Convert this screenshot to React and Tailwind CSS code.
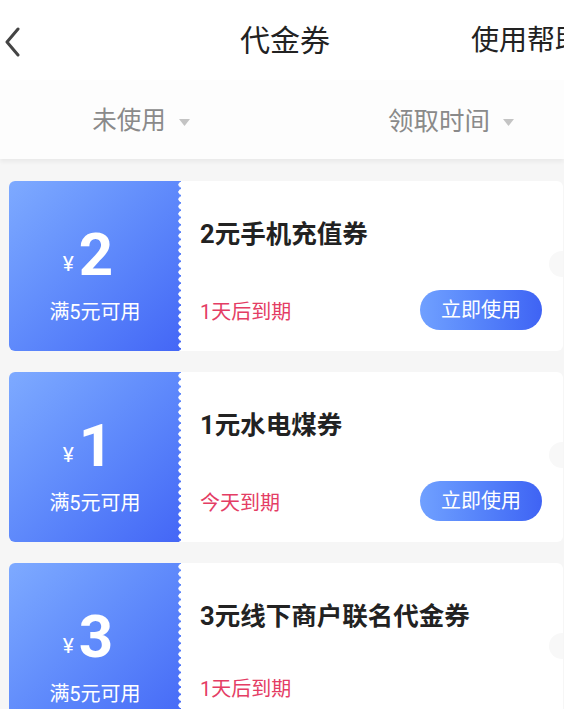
import React from "react";

const coupons = [
  { amount: "2", title: "2元手机充值券", expire: "1天后到期", button: true },
  { amount: "1", title: "1元水电煤券", expire: "今天到期", button: true },
  { amount: "3", title: "3元线下商户联名代金券", expire: "1天后到期", button: false },
];

const Caret = () => (
  <svg width="11" height="7" viewBox="0 0 11 7" className="ml-[13px] mt-[2px]">
    <path d="M0 0 L11 0 L5.5 7 Z" fill="#c4c4c4" />
  </svg>
);

const CouponCard = ({ coupon }) => (
  <div className="relative flex h-[170px] w-[554px] overflow-hidden rounded-[6px] bg-white">
    <div className="relative flex w-[172px] shrink-0 flex-col items-center bg-gradient-to-br from-[#7eaaff] to-[#4466f6] text-white">
      <div className="mt-[50px] flex items-end pr-[14px]">
        <span className="mb-[4px] mr-[5px] text-[21px] leading-none">¥</span>
        <span className="text-[60px] font-bold leading-[48px]">{coupon.amount}</span>
      </div>
      <div className="mt-[19px] text-[20px] leading-[28px]">满5元可用</div>
      <div className="absolute right-0 top-0 h-full w-[3px] bg-[radial-gradient(circle_at_100%_50%,#ffffff_2.4px,transparent_2.9px)] bg-[length:3px_7.3px]" />
    </div>
    <div className="flex flex-1 flex-col pl-[19px] pr-[21px]">
      <div className="mt-[36px] text-[25.5px] font-bold leading-[34px] text-[#222]">{coupon.title}</div>
      <div className="mt-[39px] flex items-center justify-between">
        <span className="mt-[3px] text-[20px] leading-[28px] text-[#e43d64]">{coupon.expire}</span>
        {coupon.button && (
          <button className="h-[40px] w-[122px] rounded-full bg-gradient-to-r from-[#70a0ff] to-[#3f63f4] text-[20px] text-white">
            立即使用
          </button>
        )}
      </div>
    </div>
    <div className="absolute right-[-12px] top-[70px] h-[26px] w-[26px] rounded-full bg-[#f8f8f8]" />
  </div>
);

export default function App() {
  return (
    <div
      className="h-[709px] w-[564px] overflow-hidden bg-[#f6f6f6]"
      style={{ fontFamily: 'Roboto, "Noto Sans CJK SC", sans-serif' }}
    >
      <div className="relative flex h-[80px] items-center bg-white">
        <svg width="16" height="30" viewBox="0 0 16 30" className="absolute left-[4px] top-[27px]">
          <path d="M14 2 L3 15 L14 28" fill="none" stroke="#444" strokeWidth="3" strokeLinecap="round" strokeLinejoin="round" />
        </svg>
        <div className="absolute left-[240px] top-[20px] text-[30px] leading-[42px] text-[#222]">代金券</div>
        <div className="absolute left-[471px] top-[21px] whitespace-nowrap text-[28px] leading-[40px] text-[#222]">使用帮助</div>
      </div>
      <div className="relative flex h-[79px] items-center bg-[#fdfdfd] pt-[4px] shadow-[0_3px_4px_rgba(0,0,0,0.05)]">
        <div className="flex w-[282px] items-center justify-center">
          <span className="text-[24.5px] text-[#8a8a8a]">未使用</span>
          <Caret />
        </div>
        <div className="flex w-[282px] items-center justify-center pl-[56px]">
          <span className="text-[25.5px] text-[#8a8a8a]">领取时间</span>
          <Caret />
        </div>
      </div>
      <div className="flex flex-col gap-[21px] pl-[9px] pt-[22px]">
        {coupons.map((c) => (
          <CouponCard key={c.amount} coupon={c} />
        ))}
      </div>
    </div>
  );
}
